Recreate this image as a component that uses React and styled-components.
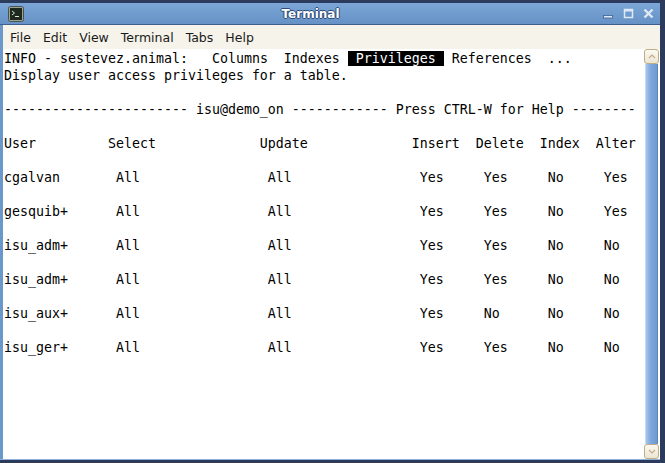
import React from "react";
import styled, { createGlobalStyle } from "styled-components";

const GlobalStyle = createGlobalStyle`
  html, body {
    margin: 0;
    padding: 0;
    background: #2c3a5c;
    overflow: hidden;
  }
`;

const Desktop = styled.div`
  width: 665px;
  height: 463px;
  padding-top: 3px;
  box-sizing: border-box;
  background: #2c3a5c;
`;

const Window = styled.div`
  width: 660px;
  height: 457px;
  display: flex;
  flex-direction: column;
  background: #6b98cb;
  border-radius: 5px 5px 0 0;
  border-bottom: 1px solid #8fb2dc;
  box-sizing: border-box;
`;

const TitleBar = styled.div`
  height: 21px;
  display: flex;
  align-items: center;
  padding: 0 6px 0 8px;
  background: linear-gradient(#7ba6d6, #6591c6);
  border-bottom: 1px solid #3d5f8c;
`;

const TitleIcon = styled.div`
  width: 16px;
  height: 16px;
  display: flex;
`;

const Title = styled.div`
  flex: 1;
  text-align: center;
  padding-right: 6px;
  font-family: "DejaVu Sans", sans-serif;
  font-weight: bold;
  font-size: 12px;
  color: #ffffff;
  text-shadow: 1px 0 #2d4a78, -1px 0 #2d4a78, 0 1px #2d4a78, 0 -1px #2d4a78;
`;

const Controls = styled.div`
  display: flex;
  gap: 9px;
  align-items: center;
`;

const MenuBar = styled.div`
  height: 24px;
  display: flex;
  align-items: center;
  padding-left: 1px;
  margin-left: 3px;
  background: #f6f3eb;
  font-family: "DejaVu Sans", sans-serif;
  font-size: 12.5px;
  color: #1a1a1a;
`;

const MenuItem = styled.span`
  padding: 0 6px;
`;

const Body = styled.div`
  flex: 1;
  display: flex;
  margin-left: 3px;
  min-height: 0;
`;

const Screen = styled.div`
  flex: 1;
  background: #ffffff;
  padding: 1px 0 0 1px;
  font-family: "DejaVu Sans Mono", monospace;
  font-size: 13.29px;
  line-height: 17px;
  color: #000000;
  white-space: pre;
  overflow: hidden;
`;

const Line = styled.div`
  height: 17px;
`;

const Highlight = styled.span`
  background: #000000;
  color: #ffffff;
`;

const Grid = styled.div`
  display: grid;
  grid-template-columns: 13ch 19ch 19ch 8ch 8ch 7ch 6ch;
  grid-auto-rows: 17px;
  row-gap: 17px;
`;

const Cell = styled.span`
  padding-left: ${(p) => (p.$indent ? "1ch" : "0")};
`;

const Scrollbar = styled.div`
  width: 15px;
  display: flex;
  flex-direction: column;
  background: #ffffff;
  padding-right: 1px;
`;

const ArrowButton = styled.div`
  height: 15px;
  box-sizing: border-box;
  border: 1px solid #bfae84;
  border-radius: 3px;
  background: linear-gradient(#fbf9f2, #ebe5d4);
  display: flex;
  align-items: center;
  justify-content: center;
`;

const Thumb = styled.div`
  flex: 1;
  margin: 0 1px;
  background: linear-gradient(90deg, #a9c6ec, #80a9dd 40%, #6e98d0);
  border-left: 1px solid #c6d9f2;
  border-right: 1px solid #5c86be;
`;

const statusItems = ["Columns", "Indexes"];

const header = ["User", "Select", "Update", "Insert", "Delete", "Index", "Alter"];

const rows = [
  ["cgalvan", "All", "All", "Yes", "Yes", "No", "Yes"],
  ["gesquib+", "All", "All", "Yes", "Yes", "No", "Yes"],
  ["isu_adm+", "All", "All", "Yes", "Yes", "No", "No"],
  ["isu_adm+", "All", "All", "Yes", "Yes", "No", "No"],
  ["isu_aux+", "All", "All", "Yes", "No", "No", "No"],
  ["isu_ger+", "All", "All", "Yes", "Yes", "No", "No"],
];

const TerminalIcon = () => (
  <svg width="16" height="16" viewBox="0 0 16 16">
    <rect x="0.5" y="0.5" width="15" height="15" rx="2" fill="#9aa39a" stroke="#4b524b" />
    <rect x="2" y="2" width="12" height="12" fill="#1f2a1f" />
    <path d="M4 5 L6.5 7 L4 9" stroke="#d8e8d8" strokeWidth="1" fill="none" />
    <path d="M7 10.5 H11" stroke="#d8e8d8" strokeWidth="1" />
  </svg>
);

const ControlIcon = ({ kind }) => (
  <svg width="11" height="11" viewBox="0 0 11 11">
    {kind === "min" && (
      <rect x="0.5" y="7.5" width="9" height="2.5" fill="#dfe8f5" stroke="#3d5f8c" strokeWidth="0.8" />
    )}
    {kind === "max" && (
      <g fill="none" stroke="#dfe8f5">
        <rect x="1.5" y="1.5" width="8" height="8" strokeWidth="1.5" />
        <rect x="1.5" y="1.5" width="8" height="1.5" fill="#dfe8f5" />
      </g>
    )}
    {kind === "close" && (
      <path d="M1.5 1.5 L9.5 9.5 M9.5 1.5 L1.5 9.5" stroke="#dfe8f5" strokeWidth="2.4" />
    )}
  </svg>
);

const Chevron = ({ up }) => (
  <svg width="8" height="5" viewBox="0 0 8 5">
    <path d={up ? "M1 4 L4 1 L7 4" : "M1 1 L4 4 L7 1"} stroke="#bfae84" strokeWidth="1.2" fill="none" />
  </svg>
);

const App = () => {
  return (
    <>
      <GlobalStyle />
      <Desktop>
        <Window>
          <TitleBar>
            <TitleIcon>
              <TerminalIcon />
            </TitleIcon>
            <Title>Terminal</Title>
            <Controls>
              <ControlIcon kind="min" />
              <ControlIcon kind="max" />
              <ControlIcon kind="close" />
            </Controls>
          </TitleBar>
          <MenuBar>
            {["File", "Edit", "View", "Terminal", "Tabs", "Help"].map((m) => (
              <MenuItem key={m}>{m}</MenuItem>
            ))}
          </MenuBar>
          <Body>
            <Screen>
              <Line>
                {"INFO - sestevez.animal:   "}
                {statusItems.join("  ")}
                {" "}
                <Highlight>{" Privileges "}</Highlight>
                {" References  ..."}
              </Line>
              <Line>Display user access privileges for a table.</Line>
              <Line />
              <Line>
                {"----------------------- isu@demo_on ------------ Press CTRL-W for Help --------"}
              </Line>
              <Line />
              <Grid>
                {header.map((h) => (
                  <Cell key={h}>{h}</Cell>
                ))}
                {rows.map((r, i) =>
                  r.map((c, j) => (
                    <Cell key={`${i}-${j}`} $indent={j > 0}>
                      {c}
                    </Cell>
                  ))
                )}
              </Grid>
            </Screen>
            <Scrollbar>
              <ArrowButton>
                <Chevron up />
              </ArrowButton>
              <Thumb />
              <ArrowButton>
                <Chevron />
              </ArrowButton>
            </Scrollbar>
          </Body>
        </Window>
      </Desktop>
    </>
  );
};

export default App;
